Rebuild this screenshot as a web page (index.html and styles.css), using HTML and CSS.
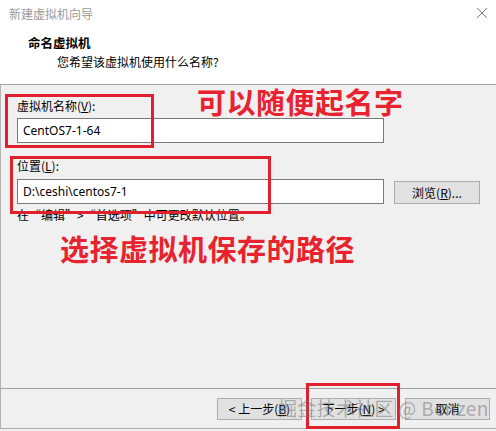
FILE: index.html
```html
<!DOCTYPE html>
<html lang="zh-CN">
<head>
<meta charset="utf-8">
<title>新建虚拟机向导</title>
<link rel="stylesheet" href="styles.css">
</head>
<body>
<div class="window">
  <div class="titlebar">
    <span class="title">新建虚拟机向导</span>
    <svg class="close" width="12" height="12" viewBox="0 0 12 12"><path d="M1 1L11 11M11 1L1 11" stroke="#777" stroke-width="1"/></svg>
  </div>
  <div class="header">
    <div class="h-title">命名虚拟机</div>
    <div class="h-sub">您希望该虚拟机使用什么名称?</div>
  </div>
  <div class="content">
    <label class="label">虚拟机名称(<u>V</u>):</label>
    <div class="row">
      <div class="input">CentOS7-1-64</div>
    </div>
    <label class="label label-loc">位置(<u>L</u>):</label>
    <div class="row row-loc">
      <div class="input">D:\ceshi\centos7-1</div>
      <button class="btn btn-browse">浏览(<u>R</u>)...</button>
    </div>
    <div class="hint">在“编辑”&gt;“首选项”中可更改默认位置。</div>

    <div class="mark mark-name"></div>
    <div class="mark mark-loc"></div>
    <div class="note note-name">可以随便起名字</div>
    <div class="note note-loc">选择虚拟机保存的路径</div>
  </div>
  <div class="footer">
    <button class="btn">&lt; 上一步(<u>B</u>)</button>
    <button class="btn">下一步(<u>N</u>) &gt;</button>
    <button class="btn">取消</button>
    <div class="mark mark-next"></div>
    <div class="watermark">掘金技术社区 @ Benzen</div>
  </div>
</div>
</body>
</html>
```

FILE: styles.css
```css
* { box-sizing: border-box; }

html, body {
  margin: 0;
  padding: 0;
  background: #f0f0f0;
}

body {
  width: 496px;
  height: 431px;
  overflow: hidden;
  font-family: "Noto Sans CJK SC", "Noto Sans", sans-serif;
  font-size: 12px;
  color: #000;
}

.window {
  position: relative;
  display: flex;
  flex-direction: column;
  width: 496px;
  height: 429px;
  border-bottom: 1px solid #a9a9a9;
}

.titlebar {
  height: 30px;
  background: #fff;
  display: flex;
  align-items: center;
  justify-content: space-between;
  padding: 0 8px 4px 9px;
}

.title {
  color: #9a9a9a;
  font-size: 12px;
}

.header {
  height: 55px;
  background: #fff;
  border-bottom: 1px solid #a0a0a0;
  padding-top: 5px;
}

.h-title {
  font-weight: bold;
  font-size: 12.5px;
  line-height: 16px;
  padding-left: 28px;
}

.h-sub {
  line-height: 16px;
  padding-left: 57px;
  margin-top: 3px;
}

.content {
  position: relative;
  flex: 1;
  padding: 13px 0 0 17px;
  border-left: 1px solid #b4b4b4;
  padding-left: 16px;
}

.label {
  display: block;
  line-height: 16px;
}

.label-loc { margin-top: 15px; }

.row {
  display: flex;
  align-items: center;
  margin-top: 4px;
}

.input {
  width: 367px;
  height: 25px;
  background: #fff;
  border: 1px solid #7a7a7a;
  padding-left: 5px;
  line-height: 23px;
  font-family: "Noto Sans", "Noto Sans CJK SC", sans-serif;
  font-size: 12px;
}

.btn {
  font-family: "Noto Sans CJK SC", "Noto Sans", sans-serif;
  font-size: 12px;
  height: 22px;
  width: 86px;
  padding: 0;
  background: #e1e1e1;
  border: 1px solid #adadad;
  color: #000;
  line-height: 20px;
}

.btn-browse {
  margin-left: 10px;
  height: 23px;
  margin-top: 3px;
}

.hint {
  margin-top: 3px;
  line-height: 16px;
}

/* red annotation frames and captions */
.mark {
  position: absolute;
  border: 3px solid #e0202c;
}

.mark-name { left: 4px; top: 9px; width: 149px; height: 54px; }
.mark-loc { left: 9px; top: 71px; width: 261px; height: 58px; }

.note {
  position: absolute;
  color: #e8222e;
  font-weight: bold;
  font-size: 29px;
  line-height: 32px;
  font-family: "Noto Sans CJK SC", sans-serif;
  letter-spacing: 0.5px;
}

.note-name { left: 196px; top: 0px; }
.note-loc { left: 59px; top: 147px; }

.footer {
  position: relative;
  height: 40px;
  border-top: 1px solid #a0a0a0;
  border-left: 1px solid #b4b4b4;
  display: flex;
  justify-content: flex-end;
  gap: 9px;
  padding: 9px 6px 0 0;
}

.footer .btn {
  width: 85px;
  height: 22px;
}

.mark-next { left: 305px; top: -6px; width: 94px; height: 46px; }

.watermark {
  position: absolute;
  left: 277px;
  top: 6px;
  font-size: 19px;
  line-height: 26px;
  color: rgba(120, 120, 120, 0.55);
  font-family: "Noto Sans CJK SC", "Noto Sans", sans-serif;
  white-space: nowrap;
  letter-spacing: 0.3px;
}
```
